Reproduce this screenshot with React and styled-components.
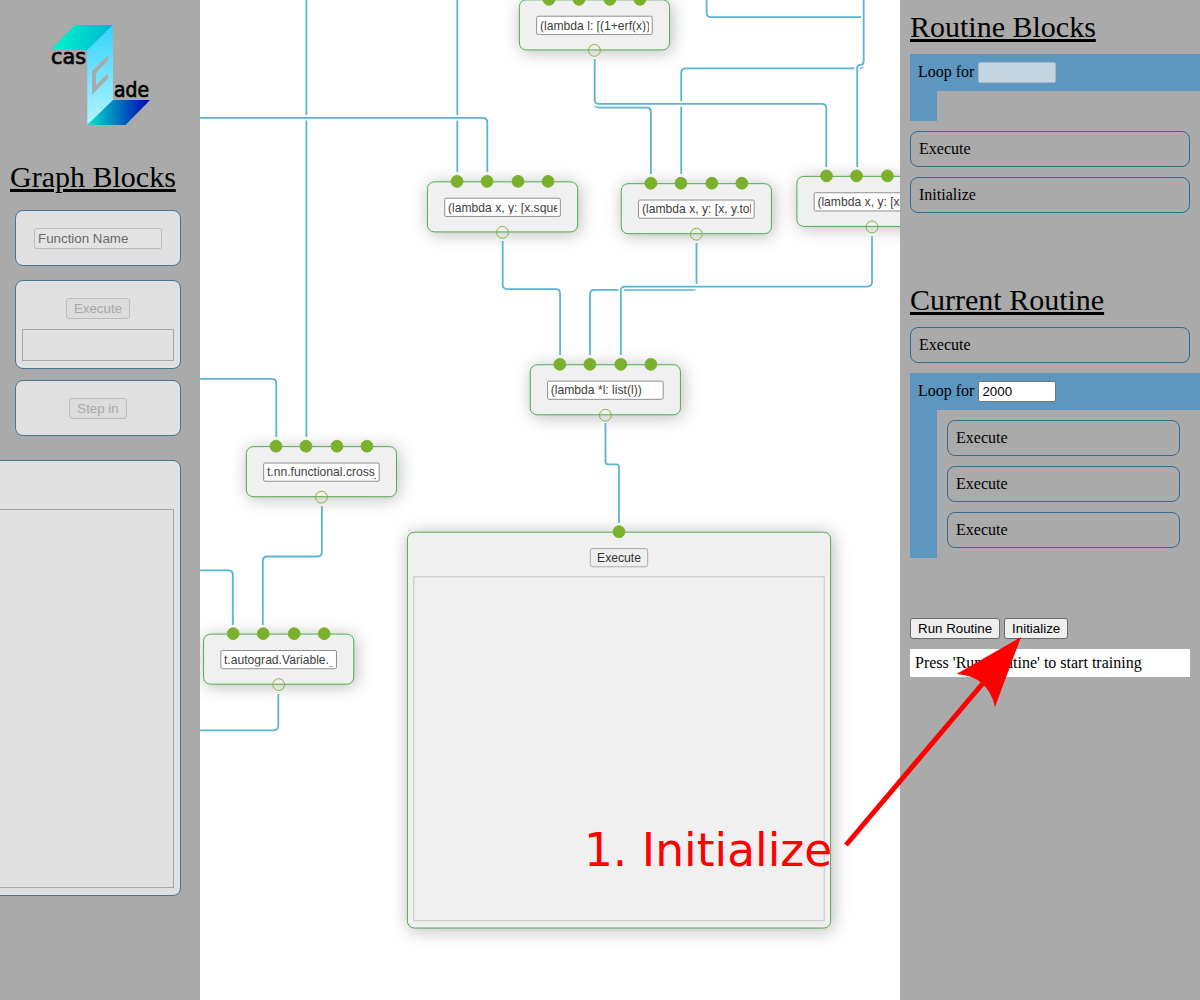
import React from "react";
import styled, { createGlobalStyle } from "styled-components";

const SCALE = 0.91;

const GlobalStyle = createGlobalStyle`
  * { box-sizing: border-box; }
  body { margin: 0; overflow: hidden; }
`;

const Page = styled.div`
  position: relative;
  display: grid;
  grid-template-columns: 200px 700px 300px;
  height: 1000px;
  background: #fff;
  font-family: "Liberation Serif", serif;
  font-size: 16px;
  color: #000;
`;

const Sidebar = styled.aside`
  display: flex;
  flex-direction: column;
  background: #aaa;
  overflow: hidden;
  min-width: 0;
`;

const LeftBar = styled(Sidebar)`
  padding-top: 20px;
`;

const RightBar = styled(Sidebar)`
  padding: 10px 0 0 10px;
`;

const Heading = styled.h1`
  margin: 0;
  font-size: 30px;
  line-height: 34px;
  font-weight: 400;
  text-decoration: underline;
  text-decoration-thickness: 3px;
`;

const GraphHeading = styled(Heading)`
  margin: 30px 0 16px 10px;
`;

const Logo = styled.svg`
  display: block;
  width: 110px;
  height: 110px;
  margin-left: 45px;
  overflow: visible;
`;

const Card = styled.div`
  flex: none;
  display: flex;
  flex-direction: column;
  align-items: center;
  width: ${(p) => p.$w || 166}px;
  height: ${(p) => p.$h}px;
  margin: 0 0 ${(p) => p.$gap || 0}px 15px;
  padding: 17px 6px 7px;
  border: 1px solid #467594;
  border-radius: 8px;
  background: #e0e0e0;
`;

const WideCard = styled(Card)`
  margin-left: -285px;
`;

const NameInput = styled.input`
  width: 128px;
  height: 21px;
  padding: 1px 3px;
  border: 1px solid #bcbcbc;
  border-radius: 2px;
  background: #e3e3e3;
  font: 13.333px "Liberation Sans", sans-serif;
  &::placeholder { color: #6c6c6c; }
`;

const GhostButton = styled.button`
  height: 21px;
  padding: 1px 7px;
  border: 1px solid #bcbcbc;
  border-radius: 3px;
  background: #dcdcdc;
  color: #a8a8a8;
  font: 13.333px "Liberation Sans", sans-serif;
`;

const Output = styled.div`
  flex: 1;
  align-self: stretch;
  margin-top: ${(p) => p.$top || 10}px;
  border: 1px solid ${(p) => p.$line || "#a6a6a6"};
`;

const Stage = styled.main`
  position: relative;
  overflow: hidden;
  background: #fff;
`;

const Wires = styled.svg`
  display: block;
  width: 700px;
  height: 1000px;
  fill: none;
`;

const Canvas = styled.div`
  position: absolute;
  top: 0;
  left: 0;
  transform: translate(-0.5px, 0.3px) scale(${SCALE});
  transform-origin: 0 0;
`;

const NodeBox = styled.div`
  position: absolute;
  left: ${(p) => p.$x}px;
  top: ${(p) => p.$y}px;
  display: flex;
  flex-direction: column;
  align-items: center;
  width: ${(p) => p.$w || 166}px;
  height: ${(p) => p.$h || 56}px;
  padding: 17px 6px 7px;
  border: 1px solid #40a746;
  border-radius: 8px;
  background: #f0f0f0;
  box-shadow: 2px 2px 19px #bbb;
`;

const NodeInput = styled.input`
  width: 128px;
  height: 21px;
  padding: 1px 3px;
  border: 1px solid #858585;
  border-radius: 2px;
  background: #fff;
  color: #404040;
  font: 13.333px "Liberation Sans", sans-serif;
`;

const NodeButton = styled.button`
  height: 21px;
  padding: 1px 7px;
  border: 1px solid #a5a5a5;
  border-radius: 3px;
  background: #efefef;
  color: #333;
  font: 13.333px "Liberation Sans", sans-serif;
`;

const Inputs = styled.div`
  position: absolute;
  top: -8px;
  left: -1px;
  right: -1px;
  display: flex;
  justify-content: space-evenly;
`;

const Outputs = styled(Inputs)`
  top: auto;
  bottom: -8px;
`;

const Slot = styled.span`
  display: flex;
  justify-content: center;
  width: 0;
`;

const Port = styled.i`
  flex: none;
  width: 14px;
  height: 14px;
  border: 1px solid #7ab02c;
  border-radius: 50%;
  background: ${(p) => (p.$hollow ? "transparent" : "#7ab02c")};
`;

const Block = styled.div`
  height: 36px;
  margin: 0 10px 10px 0;
  padding: 8px;
  border: 1px solid #2f6a93;
  border-radius: 8px;
  line-height: 18px;
`;

const Loop = styled.div`
  margin-bottom: ${(p) => p.$gap}px;
`;

const LoopHead = styled.div`
  display: flex;
  align-items: center;
  gap: 4px;
  height: 37px;
  padding: 0 8px;
  background: #5d96be;
`;

const LoopLabel = styled.span`
  line-height: 18px;
  margin-bottom: 1px;
`;

const LoopBody = styled.div`
  display: flow-root;
  min-height: 30px;
  padding: ${(p) => (p.$filled ? "10px 10px 0 10px" : "0")};
  border-left: 27px solid #5d96be;
  ${Block} { margin-right: 0; width: 233px; }
`;

const CountInput = styled.input`
  width: 78px;
  height: 21px;
  padding: 1px 3px;
  border: 1px solid ${(p) => (p.disabled ? "#a4b9c8" : "#767676")};
  border-radius: 2px;
  background: ${(p) => (p.disabled ? "#c4d5e2" : "#fff")};
  color: #000;
  font: 13.333px "Liberation Sans", sans-serif;
`;

const Actions = styled.div`
  display: flex;
  gap: 4px;
  margin-bottom: 10px;
`;

const ActionButton = styled.button`
  height: 21px;
  padding: 1px 7px;
  border: 1px solid #6b6b6b;
  border-radius: 3px;
  background: #efefef;
  color: #000;
  font: 13.333px "Liberation Sans", sans-serif;
`;

const Status = styled.div`
  height: 28px;
  margin-right: 10px;
  padding: 5px;
  line-height: 18px;
  background: #fff;
`;

const CurrentSection = styled.section`
  margin-top: 60px;
`;

const Blocks = styled.div`
  margin-top: 10px;
`;

const Annotation = styled.svg`
  position: absolute;
  inset: 0;
  width: 1200px;
  height: 1000px;
  pointer-events: none;
`;

const wires = [
  "M457.3 -5V172",
  "M306.4 -5V437",
  "M200 117.8H482.8Q487.3 117.8 487.3 122.3V172",
  "M200 378.9H271.8Q276.3 378.9 276.3 383.4V437",
  "M706.6 -5V12.7Q706.6 17.2 711.1 17.2H864",
  "M863.7 58V63.8Q863.7 68.3 859.2 68.3H685.7Q681.2 68.3 681.2 72.8V174",
  "M863.7 -5V60.5Q863.7 64.8 860.5 64.8Q857.2 64.8 857.2 68V167",
  "M594.7 59V103Q594.7 107.5 599.2 107.5H646.4Q650.9 107.5 650.9 112V174",
  "M594.7 59V99.4Q594.7 103.9 599.2 103.9H821.8Q826.3 103.9 826.3 108.4V167",
  "M502.7 241V284.6Q502.7 289.1 507.2 289.1H555.6Q560.1 289.1 560.1 293.6V355",
  "M696.5 243V285.4Q696.5 289.9 692 289.9H594.5Q590 289.9 590 294.4V355",
  "M872 236V282.1Q872 286.6 867.5 286.6H625.3Q620.8 286.6 620.8 291.1V355",
  "M605.5 423V462Q605.5 464.4 608 464.4H616.5Q619 464.4 619 467V523",
  "M321.9 506V552Q321.9 556.5 317.4 556.5H267.3Q262.8 556.5 262.8 561V625",
  "M195 570.4H228.3Q232.8 570.4 232.8 574.9V625",
  "M278.3 694V725.8Q278.3 730.3 273.8 730.3H195",
];

const nodes = [
  { x: 351, y: -1, text: "(lambda l: [(1+erf(x))/2 for x in l])" },
  { x: 250, y: 199, text: "(lambda x, y: [x.squeeze(), y])" },
  { x: 463, y: 201, text: "(lambda x, y: [x, y.tolist()])" },
  { x: 656, y: 193, text: "(lambda x, y: [x, y])" },
  { x: 363, y: 400, text: "(lambda *l: list(l))" },
  { x: 51, y: 490, text: "t.nn.functional.cross_entropy" },
  { x: 4, y: 696, text: "t.autograd.Variable.__init__" },
];

function Ports({ count }) {
  return (
    <Inputs>
      {Array.from({ length: count }, (_, i) => (
        <Slot key={i}>
          <Port />
        </Slot>
      ))}
    </Inputs>
  );
}

function GraphNode({ x, y, text }) {
  return (
    <NodeBox $x={x} $y={y}>
      <Ports count={4} />
      <NodeInput defaultValue={text} />
      <Outputs>
        <Slot>
          <Port $hollow />
        </Slot>
      </Outputs>
    </NodeBox>
  );
}

function CascadeLogo() {
  return (
    <Logo viewBox="45 20 110 110">
      <defs>
        <linearGradient id="top" x1="0" x2="1">
          <stop offset="0.1" stopColor="#00f0cc" />
          <stop offset="1" stopColor="#00b4d2" />
        </linearGradient>
        <linearGradient id="mid" x1="0" x2="0" y1="0" y2="1">
          <stop offset="0" stopColor="#34d2fc" />
          <stop offset="1" stopColor="#b4f4ff" />
        </linearGradient>
        <linearGradient id="low" x1="0" x2="1">
          <stop offset="0" stopColor="#00e6cc" />
          <stop offset="1" stopColor="#0000b4" />
        </linearGradient>
      </defs>
      <path d="M75 25H113L87.3 50H50.5Z" fill="url(#top)" />
      <path d="M113 25V100L87.3 125V50Z" fill="url(#mid)" />
      <path d="M113 100H150L125.5 125H87.3Z" fill="url(#low)" />
      <g transform="skewY(-45)" fill="#aaa">
        <rect x="92" y="163.2" width="16" height="5.6" />
        <rect x="92" y="163.2" width="4" height="23.3" />
        <rect x="92" y="180.9" width="16" height="5.6" />
      </g>
      <g
        fontFamily="DejaVu Sans, sans-serif"
        fontSize="20.5"
        stroke="#000"
        strokeWidth="0.7"
      >
        <text x="51" y="64.1" textLength="35" lengthAdjust="spacingAndGlyphs">cas</text>
        <text x="114" y="96.8" textLength="35" lengthAdjust="spacingAndGlyphs">ade</text>
      </g>
    </Logo>
  );
}

export default function App() {
  return (
    <Page>
      <GlobalStyle />
      <LeftBar>
        <CascadeLogo />
        <GraphHeading>Graph Blocks</GraphHeading>
        <Card $h={56} $gap={14}>
          <NameInput placeholder="Function Name" />
        </Card>
        <Card $h={89} $gap={11}>
          <GhostButton>Execute</GhostButton>
          <Output />
        </Card>
        <Card $h={56} $gap={24}>
          <GhostButton>Step in</GhostButton>
        </Card>
        <WideCard $w={466} $h={436}>
          <Output $top={31} />
        </WideCard>
      </LeftBar>

      <Stage>
        <Wires viewBox="200 0 700 1000">
          {wires.map((d) => (
            <g key={d}>
              <path d={d} stroke="#fff" strokeWidth="5.4" />
              <path d={d} stroke="#5bb4d2" strokeWidth="1.82" />
            </g>
          ))}
        </Wires>
        <Canvas>
          {nodes.map((n) => (
            <GraphNode key={n.text} {...n} />
          ))}
          <NodeBox $x={228} $y={584} $w={466} $h={436}>
            <Ports count={1} />
            <NodeButton>Execute</NodeButton>
            <Output $line="#c0c0c0" />
          </NodeBox>
        </Canvas>
      </Stage>

      <RightBar>
        <Heading>Routine Blocks</Heading>
        <Blocks>
          <Loop $gap={10}>
            <LoopHead>
              <LoopLabel>Loop for</LoopLabel>
              <CountInput disabled />
            </LoopHead>
            <LoopBody />
          </Loop>
          <Block>Execute</Block>
          <Block>Initialize</Block>
        </Blocks>
        <CurrentSection>
          <Heading>Current Routine</Heading>
          <Blocks>
            <Block>Execute</Block>
            <Loop $gap={60}>
              <LoopHead>
                <LoopLabel>Loop for</LoopLabel>
                <CountInput defaultValue="2000" />
              </LoopHead>
              <LoopBody $filled>
                <Block>Execute</Block>
                <Block>Execute</Block>
                <Block>Execute</Block>
              </LoopBody>
            </Loop>
          </Blocks>
        </CurrentSection>
        <Actions>
          <ActionButton>Run Routine</ActionButton>
          <ActionButton>Initialize</ActionButton>
        </Actions>
        <Status>Press 'Run Routine' to start training</Status>
      </RightBar>

      <Annotation viewBox="0 0 1200 1000" fill="#f00">
        <path d="M846 845L984 682" stroke="#f00" strokeWidth="5" />
        <path d="M1021 637L956.5 674Q988 676 995 707Z" />
        <text x="583.9" y="866" fontFamily="DejaVu Sans, sans-serif" fontSize="45.5">
          1. Initialize
        </text>
      </Annotation>
    </Page>
  );
}
